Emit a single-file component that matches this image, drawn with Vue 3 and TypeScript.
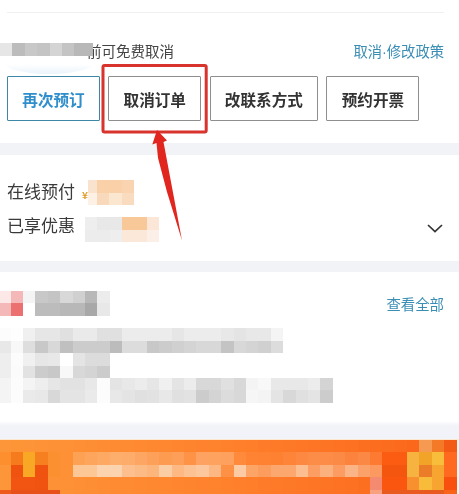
<script setup lang="ts">
const g = (s: string): string[] => s.split(' ').map((v) => (v.length === 2 ? `#${v}${v}${v}` : `#${v}`))

const noticeCells = g('e6 bc c8 c4 d4 c4 b8 b8')
const payCells = [g('f9e3cf fad0a8 fad0a8 fad4b0'), g('fdf0e4 f9d9bc fbe6d0 f9dcc0')]
const discountCells = [g('ee e8 e8 f8c898 f8c898 fbe6d8'), g('ec ec ee fbe8d8 fbe8d8 fcefe8')]
const titleCells = [
  g('fde8e8 f4b8b8 f4f4f4 c8 c4 d8 d0 b8 ec'),
  g('f4b8b8 ec7070 ff bc bc b8 b8 a8 e8')
]
const listCells = [
  g('fc fe f0 e6 e6 e0 ea ea e0 e0 ec ec ec ec e6 ec ec ec e8 e4 e8 e8 f4'),
  g('e8 f8 de c8 d8 c0 cc cc cc bc dc dc c8 cc d0 d4 d8 d8 c4 d8 d4 d0 dc'),
  g('ee fc f0 e6 e8 ff e4 dc dc'),
  g('ee fb e2 cc c8 f8 d8 d4 cc'),
  g('f4 fc f4 ee e6 e2 e2 e8 fc e4 e8 ec e6 f0 e4 ec d8 d8 e0 d8 f4 f8 e8 e8 e8 ec d4'),
  g('f4 fc ea e8 d8 e4 e4 ea fc e8 e4 e0 e2 e8 e0 e2 cc d4 dc d8 f6 f4 e4 d8 e0 e4 cc')
]

const mix = (a: number[], b: number[], t: number): string =>
  `rgb(${a.map((v, i) => Math.round(v + (b[i] - v) * t)).join(',')})`

const baseRgb = (i: number): number[] => {
  const t = i / 37
  const from = t < 0.5 ? [253, 150, 56] : [255, 128, 44]
  const to = t < 0.5 ? [255, 128, 44] : [250, 98, 24]
  const k = t < 0.5 ? t * 2 : (t - 0.5) * 2
  return from.map((v, n) => Math.round(v + (to[n] - v) * k))
}

const overrides: Record<string, string> = {
  '1,0': '#fd8f2f', '1,1': '#f57b1c', '1,2': '#f9a825', '1,3': '#f6801f', '1,4': '#fb9030',
  '2,1': '#f0520f', '2,2': '#f9a825', '2,3': '#f0520f', '2,4': '#fb9030',
  '3,1': '#f25512', '3,2': '#f25512', '3,3': '#f0520f',
  '4,0': '#ed5a1c', '4,1': '#e8501a', '4,2': '#e8501a', '4,3': '#e8501a', '4,4': '#e8501a',
  '0,34': '#f59a50', '0,35': '#f57a28', '0,36': '#f25a15',
  '1,33': '#f7b33f', '1,34': '#f2a428', '1,35': '#f8bd3a', '1,36': '#ff6a20',
  '2,33': '#f7b33f', '2,34': '#ec7d28', '2,35': '#f7a530', '2,36': '#ff6a20',
  '3,33': '#f99030', '3,34': '#f8bc3a', '3,35': '#f7a530', '3,36': '#f9500f',
  '1,31': '#fb5c12', '1,32': '#fb5c12', '2,31': '#f5560f', '2,32': '#f5560f',
  '3,30': '#f48a70', '3,31': '#fb5610', '3,32': '#fb5610',
  '4,30': '#f8a080', '4,31': '#e85a20', '4,32': '#e85a20', '4,33': '#e85a20', '4,34': '#e85a20', '4,35': '#e85a20'
}

const lightRow1 = [0.2, 0.25, 0.3, 0.35, 0.35, 0.3, 0.25, 0.2, 0.25, 0.15, 0.3, 0.3, 0.3, 0.1, 0.05, 0.05, 0.05, 0.1, 0.15, 0.2, 0.2, 0.2, 0.15, 0.2, 0.1]
const lightRow2 = [0.6, 0.6, 0.75, 0.75, 0.55, 0.5, 0.45, 0.7, 0.5, 0.6, 0.65, 0.5, 0.15, 0.7, 0.35, 0.3, 0.4, 0.4, 0.6, 0.35, 0.5, 0.35, 0.55, 0.4, 0.35]
const pale = [250, 235, 215]

const bannerCells: string[][] = Array.from({ length: 5 }, (_, r) =>
  Array.from({ length: 37 }, (_, c) => {
    const key = `${r},${c}`
    if (overrides[key]) return overrides[key]
    const rgb = baseRgb(c)
    if (r === 1 && c >= 6 && c < 31) return mix(rgb, pale, lightRow1[c - 6])
    if (r === 2 && c >= 6 && c < 31) return mix(rgb, pale, lightRow2[c - 6])
    return mix(rgb, rgb, 0)
  })
)

const actions = [
  { label: '再次预订', primary: true },
  { label: '取消订单', primary: false },
  { label: '改联系方式', primary: false },
  { label: '预约开票', primary: false }
]
</script>

<template>
  <div class="page">
    <section class="card top">
      <div class="arc"></div>
      <div class="divider"></div>
      <div class="notice">
        <div class="notice-left">
          <div class="mrow notice-mask">
            <i v-for="(c, i) in noticeCells" :key="i" class="cell" :style="{ background: c }"></i>
          </div>
          <span class="notice-text">前可免费取消</span>
        </div>
        <a class="link">取消·修改政策</a>
      </div>
      <div class="actions">
        <button v-for="a in actions" :key="a.label" class="btn" :class="{ primary: a.primary }">{{ a.label }}</button>
      </div>
    </section>

    <section class="card pay">
      <div class="pay-row">
        <span class="label first">在线预付</span>
        <span class="yen">¥.</span>
        <div class="mosaic pay-mask">
          <div v-for="(row, r) in payCells" :key="r" class="mrow">
            <i v-for="(c, i) in row" :key="i" class="cell" :style="{ background: c }"></i>
          </div>
        </div>
      </div>
      <div class="pay-row second">
        <span class="label next">已享优惠</span>
        <div class="mosaic discount-mask">
          <div v-for="(row, r) in discountCells" :key="r" class="mrow">
            <i v-for="(c, i) in row" :key="i" class="cell" :style="{ background: c }"></i>
          </div>
        </div>
        <svg class="chevron" width="16" height="9" viewBox="0 0 16 9" fill="none">
          <path d="M1 1l7 6.5L15 1" stroke="#333" stroke-width="1.7" />
        </svg>
      </div>
    </section>

    <section class="card info">
      <div class="info-head">
        <div class="mosaic">
          <div v-for="(row, r) in titleCells" :key="r" class="mrow">
            <i v-for="(c, i) in row" :key="i" class="cell" :style="{ background: c }"></i>
          </div>
        </div>
        <a class="link all">查看全部</a>
      </div>
      <div class="mosaic list">
        <div v-for="(row, r) in listCells" :key="r" class="mrow">
          <i v-for="(c, i) in row" :key="i" class="cell" :style="{ background: c }"></i>
        </div>
      </div>
    </section>

    <div class="strip"></div>

    <section class="banner">
      <div v-for="(row, r) in bannerCells" :key="r" class="mrow">
        <i v-for="(c, i) in row" :key="i" class="cell" :style="{ background: c }"></i>
      </div>
    </section>

    <svg class="annotation" width="459" height="494" viewBox="0 0 459 494" fill="none">
      <rect x="103" y="65.4" width="103.2" height="66.6" rx="1.5" stroke="#d8332c" stroke-width="3" />
      <path d="M157 130 167 140.5 163.5 142 172.9 192 182 240.5 167 192 158 158 156.5 143 152.3 144.5Z" fill="#e0261e" />
    </svg>
  </div>
</template>

<style>
html,
body {
  margin: 0;
  background: #fff;
}
</style>

<style scoped>
.page {
  position: relative;
  width: 459px;
  height: 494px;
  overflow: hidden;
  background: #f2f3f6;
  font-family: "Noto Sans CJK SC", "Noto Sans", sans-serif;
  color: #333;
  filter: blur(0.35px);
}

.card {
  background: #fff;
}

.top {
  position: relative;
  height: 143px;
  padding: 12px 15px 0 7px;
  box-sizing: border-box;
  margin-bottom: 12px;
}

.arc {
  position: absolute;
  left: 5px;
  top: 52px;
  width: 88px;
  height: 22px;
  border-radius: 0 0 50% 50%;
  background: linear-gradient(#fff 55%, #eaf4fb);
}

.divider {
  height: 1px;
  background: #f0f0f0;
}

.notice {
  position: relative;
  display: flex;
  justify-content: space-between;
  align-items: center;
  height: 20px;
  margin-top: 27px;
}

.notice-left {
  display: flex;
  align-items: center;
  margin-left: -7px;
}

.notice-mask {
  position: relative;
  z-index: 1;
  width: 93px;
  overflow: hidden;
  margin-top: -1px;
}

.notice-text {
  margin-left: -6px;
  font-size: 14.5px;
  color: #444;
}

.link {
  font-family: "Liberation Sans", "Noto Sans CJK SC", sans-serif;
  font-size: 14.3px;
  color: #3a8db5;
}

.actions {
  position: relative;
  display: flex;
  gap: 8.3px;
  margin-top: 16px;
}

.btn {
  height: 45px;
  padding: 0 14.3px;
  box-sizing: border-box;
  border: 1px solid #8e8e8e;
  border-radius: 1px;
  background: #fff;
  font: 600 15.6px "Noto Sans CJK SC", sans-serif;
  color: #333;
  white-space: nowrap;
}

.btn.primary {
  border-color: #3f87a8;
  color: #2f8ecb;
}

.pay {
  height: 106px;
  padding: 25px 16px 0 7px;
  box-sizing: border-box;
  margin-bottom: 11px;
}

.pay-row {
  display: flex;
  align-items: center;
  height: 25px;
}

.pay-row.second {
  margin-top: 12px;
}

.label {
  font-size: 17px;
  color: #3a3a3a;
  white-space: nowrap;
}

.label.first {
  margin-bottom: 5px;
}

.label.next {
  margin-bottom: 10px;
}

.yen {
  width: 6px;
  margin-left: 7px;
  margin-top: 4px;
  font-size: 10px;
  font-weight: 700;
  color: #e0a030;
}

.pay-mask .cell:first-child {
  width: 9px;
}

.discount-mask {
  margin-left: 10px;
}

.chevron {
  margin-left: auto;
  margin-top: -2px;
}

.info {
  height: 150px;
  padding-top: 19px;
  box-sizing: border-box;
}

.info-head {
  display: flex;
  justify-content: space-between;
  align-items: center;
  padding-right: 15px;
  margin-left: -1.8px;
}

.all {
  font-size: 14.4px;
}

.list {
  margin-top: 12.6px;
  margin-left: -1.8px;
}

.strip {
  height: 17px;
  background: linear-gradient(#fbfbfd, #f2f3f8 25%);
}

.mosaic {
  display: flex;
  flex-direction: column;
}

.mrow {
  display: flex;
}

.cell {
  display: block;
  flex: none;
  width: 12.4px;
  height: 12.4px;
}

.banner {
  margin-left: -1.8px;
  border-top: 1.5px solid #fde8cf;
  width: 470px;
}

.annotation {
  position: absolute;
  left: 0;
  top: 0;
  pointer-events: none;
}
</style>
